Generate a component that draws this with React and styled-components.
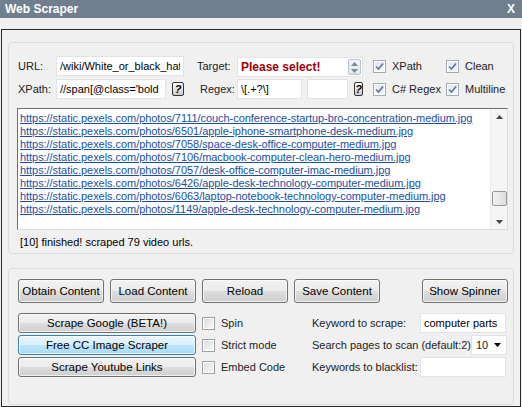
import styled, { createGlobalStyle } from "styled-components";

const GlobalStyle = createGlobalStyle`
    html, body {
        margin: 0;
        padding: 0;
        background: #f0f0f0;
    }
    body {
        font-family: "Liberation Sans", Arial, sans-serif;
        font-size: 11px;
        color: #000;
    }
`;

const links = [
    "https://static.pexels.com/photos/7111/couch-conference-startup-bro-concentration-medium.jpg",
    "https://static.pexels.com/photos/6501/apple-iphone-smartphone-desk-medium.jpg",
    "https://static.pexels.com/photos/7058/space-desk-office-computer-medium.jpg",
    "https://static.pexels.com/photos/7106/macbook-computer-clean-hero-medium.jpg",
    "https://static.pexels.com/photos/7057/desk-office-computer-imac-medium.jpg",
    "https://static.pexels.com/photos/6426/apple-desk-technology-computer-medium.jpg",
    "https://static.pexels.com/photos/6063/laptop-notebook-technology-computer-medium.jpg",
    "https://static.pexels.com/photos/1149/apple-desk-technology-computer-medium.jpg",
];

const Check = ({ checked, label }) => (
    <CheckRow>
        <Box $checked={checked}>
            {checked && (
                <svg width="9" height="9" viewBox="0 0 9 9">
                    <path d="M1 4.5 L3.5 7 L8 1.5" stroke="#6478a3" strokeWidth="1.7" fill="none" />
                </svg>
            )}
        </Box>
        <span>{label}</span>
    </CheckRow>
);

const App = () => {
    return (
        <Window>
            <GlobalStyle />
            <TitleBar>
                <span>Web Scraper</span>
                <span>X</span>
            </TitleBar>

            <Frame>
                <GroupBox $height={212}>
                    <FieldGrid>
                        <Label>URL:</Label>
                        <TextInput $w={128} readOnly value="/wiki/White_or_black_hat" />
                        <span />
                        <Label>Target:</Label>
                        <TargetSelect>
                            <span>Please select!</span>
                            <Spin>
                                <svg width="7" height="4" viewBox="0 0 7 4"><path d="M0 4 L3.5 0 L7 4Z" fill="#7d8a99" /></svg>
                                <svg width="7" height="4" viewBox="0 0 7 4"><path d="M0 0 L3.5 4 L7 0Z" fill="#7d8a99" /></svg>
                            </Spin>
                        </TargetSelect>
                        <span />
                        <Check checked label="XPath" />
                        <Check checked label="Clean" />

                        <Label>XPath:</Label>
                        <Cell>
                            <TextInput $w={110} readOnly value="//span[@class='bold f" />
                            <HelpButton>?</HelpButton>
                        </Cell>
                        <span />
                        <Label $indent={4}>Regex:</Label>
                        <Cell>
                            <TextInput $w={65} readOnly value="\[.+?\]" />
                            <TextInput $w={41} readOnly value="" />
                            <HelpButton>?</HelpButton>
                        </Cell>
                        <span />
                        <Check checked label="C# Regex" />
                        <Check checked label="Multiline" />
                    </FieldGrid>

                    <LinkBox>
                        <LinkList>
                            {links.map((l) => (
                                <Link key={l}>{l}</Link>
                            ))}
                        </LinkList>
                        <ScrollBar>
                            <svg width="7" height="4" viewBox="0 0 7 4"><path d="M0 4 L3.5 0 L7 4Z" fill="#444" /></svg>
                            <Thumb />
                            <svg width="7" height="4" viewBox="0 0 7 4"><path d="M0 0 L3.5 4 L7 0Z" fill="#444" /></svg>
                        </ScrollBar>
                    </LinkBox>

                    <Status>[10] finished! scraped 79 video urls.</Status>
                </GroupBox>

                <GroupBox $height={137} $bottom>
                    <ButtonRow>
                        <Button $w={86}>Obtain Content</Button>
                        <Button $w={86}>Load Content</Button>
                        <Button $w={86}>Reload</Button>
                        <Button $w={86}>Save Content</Button>
                        <Button $w={86} $push>Show Spinner</Button>
                    </ButtonRow>

                    <ToolArea>
                        <Stack $w={178}>
                            <Button $h={20}>Scrape Google (BETA!)</Button>
                            <Button $h={20} $active>Free CC Image Scraper</Button>
                            <Button $h={20}>Scrape Youtube Links</Button>
                        </Stack>
                        <Stack $w={104}>
                            <Check label="Spin" />
                            <Check label="Strict mode" />
                            <Check label="Embed Code" />
                        </Stack>
                        <Stack $w={194}>
                            <FormRow>
                                <span>Keyword to scrape:</span>
                                <TextInput $w={86} readOnly value="computer parts" />
                            </FormRow>
                            <FormRow>
                                <span>Search pages to scan (default:2)</span>
                                <Dropdown>
                                    <span>10</span>
                                    <svg width="7" height="4" viewBox="0 0 7 4"><path d="M0 0 L3.5 4 L7 0Z" fill="#000" /></svg>
                                </Dropdown>
                            </FormRow>
                            <FormRow>
                                <span>Keywords to blacklist:</span>
                                <TextInput $w={86} readOnly value="" />
                            </FormRow>
                        </Stack>
                    </ToolArea>
                </GroupBox>
            </Frame>
        </Window>
    );
};

const Window = styled.div`
    width: 522px;
    height: 407px;
    background: #f0f0f0;
    overflow: hidden;
    box-sizing: border-box;
`;

const TitleBar = styled.div`
    display: flex;
    justify-content: space-between;
    align-items: center;
    height: 18px;
    padding: 0 7px 0 5px;
    background: #6f7f8f;
    color: #fff;
    font-weight: bold;
    font-size: 12px;
`;

const Frame = styled.div`
    margin: 11px 1px 0 1px;
    height: 378px;
    box-sizing: border-box;
    border: 1px solid #2a2a2a;
    padding: 12px 6px 0 6px;
    display: flex;
    flex-direction: column;
    gap: 14px;
`;

const GroupBox = styled.div`
    height: ${(p) => p.$height}px;
    box-sizing: border-box;
    border: 1px solid #d8dde2;
    border-radius: 4px;
    padding: ${(p) => (p.$bottom ? "10px 5px 0 9px" : "13px 4px 0 8px")};
`;

const FieldGrid = styled.div`
    display: grid;
    grid-template-columns: 39px 128px 12px 41px 126px 10px 73px 1fr;
    grid-auto-rows: 20px;
    row-gap: 3px;
    align-items: center;
`;

const Label = styled.span`
    padding-left: ${(p) => p.$indent || 1}px;
    font-size: 11px;
    color: #222;
`;

const Cell = styled.div`
    display: flex;
    align-items: center;
    gap: 5px;
`;

const TextInput = styled.input`
    flex-shrink: 0;
    width: ${(p) => p.$w}px;
    height: 20px;
    box-sizing: border-box;
    border: 1px solid #e2e3e6;
    background: #fff;
    padding: 0 3px;
    font-family: "Liberation Sans", Arial, sans-serif;
    font-size: 11px;
    color: #000;
    outline: none;
`;

const HelpButton = styled.span`
    display: flex;
    align-items: center;
    justify-content: center;
    width: 12px;
    height: 14px;
    box-sizing: border-box;
    border: 1px solid #333;
    border-radius: 2px;
    background: linear-gradient(#ffffff, #c9c9c9);
    font-weight: bold;
    font-style: italic;
    font-size: 11px;
    margin-left: 1px;
`;

const TargetSelect = styled.div`
    display: flex;
    align-items: center;
    justify-content: space-between;
    height: 20px;
    margin-top: 2px;
    box-sizing: border-box;
    border: 1px solid #e2e3e6;
    background: #fff;
    padding: 0 1px 0 3px;
    color: #a00000;
    font-weight: bold;
    font-size: 12px;
`;

const Spin = styled.div`
    display: flex;
    flex-direction: column;
    justify-content: space-around;
    align-items: center;
    width: 13px;
    height: 16px;
    box-sizing: border-box;
    border: 1px solid #b9c3cf;
    border-radius: 2px;
    background: linear-gradient(#f3f6f9, #dfe5eb);
`;

const CheckRow = styled.label`
    display: flex;
    align-items: center;
    gap: 6px;
    font-size: 11px;
    height: 20px;
    color: #222;
    white-space: nowrap;
`;

const Box = styled.span`
    display: flex;
    flex-shrink: 0;
    align-items: center;
    justify-content: center;
    width: 13px;
    height: 13px;
    box-sizing: border-box;
    border: 1px solid ${(p) => (p.$checked ? "#a4acb8" : "#a0a0a0")};
    background: ${(p) =>
        p.$checked ? "linear-gradient(#e4e8ee, #f4f6f8)" : "linear-gradient(135deg, #d9d9d9, #fafafa)"};
    box-shadow: inset 0 0 0 1px #fff;
`;

const LinkBox = styled.div`
    display: flex;
    margin-top: 9px;
    width: 491px;
    height: 122px;
    box-sizing: border-box;
    border: 1px solid #dcdcdc;
    border-top-color: #6f6f6f;
    border-left-color: #6f6f6f;
    background: #fff;
`;

const LinkList = styled.div`
    flex: 1;
    display: flex;
    flex-direction: column;
    padding: 3px 0 0 2px;
`;

const Link = styled.a`
    font-size: 11px;
    line-height: 13px;
    letter-spacing: -0.05px;
    color: #1a4f9e;
    text-decoration: underline;
    white-space: nowrap;
`;

const ScrollBar = styled.div`
    display: flex;
    flex-direction: column;
    align-items: center;
    width: 17px;
    background: #f5f5f5;
    padding: 6px 0 5px;
    box-sizing: border-box;
    border-left: 1px solid #ececec;

    svg:last-child {
        margin-top: auto;
    }
`;

const Thumb = styled.div`
    margin-top: 72px;
    width: 15px;
    height: 15px;
    box-sizing: border-box;
    border: 1px solid #979797;
    border-radius: 2px;
    background: linear-gradient(90deg, #f4f4f4, #dcdcdc);
`;

const Status = styled.div`
    margin-top: 6px;
    padding-left: 3px;
    font-size: 11px;
`;

const ButtonRow = styled.div`
    display: flex;
    gap: 6px;
    height: 24px;
`;

const Button = styled.button`
    width: ${(p) => (p.$w ? `${p.$w}px` : "100%")};
    height: ${(p) => p.$h || 24}px;
    margin-left: ${(p) => (p.$push ? "auto" : "0")};
    box-sizing: border-box;
    padding: 0;
    border: 1px solid ${(p) => (p.$active ? "#3c7fb1" : "#707070")};
    border-radius: 3px;
    background: ${(p) =>
        p.$active
            ? "linear-gradient(#eaf6fd 0%, #d9f0fc 50%, #bee6fd 51%, #a7d9f5 100%)"
            : "linear-gradient(#f2f2f2 0%, #ebebeb 50%, #dddddd 51%, #cfcfcf 100%)"};
    font-family: "Liberation Sans", Arial, sans-serif;
    font-size: 11.5px;
    color: #000;
    box-shadow: inset 0 0 0 1px rgba(255, 255, 255, 0.7);
`;

const ToolArea = styled.div`
    display: flex;
    gap: 6px;
    margin-top: 10px;
`;

const Stack = styled.div`
    display: flex;
    flex-direction: column;
    gap: 2px;
    width: ${(p) => p.$w}px;
`;

const FormRow = styled.div`
    display: flex;
    align-items: center;
    justify-content: space-between;
    height: 20px;
    font-size: 11px;
    color: #222;
    white-space: nowrap;
`;

const Dropdown = styled.div`
    display: flex;
    flex-shrink: 0;
    align-items: center;
    justify-content: space-between;
    width: 36px;
    height: 20px;
    box-sizing: border-box;
    border: 1px solid #e2e3e6;
    background: #fff;
    padding: 0 5px 0 4px;
    font-size: 11px;
`;

export default App;
